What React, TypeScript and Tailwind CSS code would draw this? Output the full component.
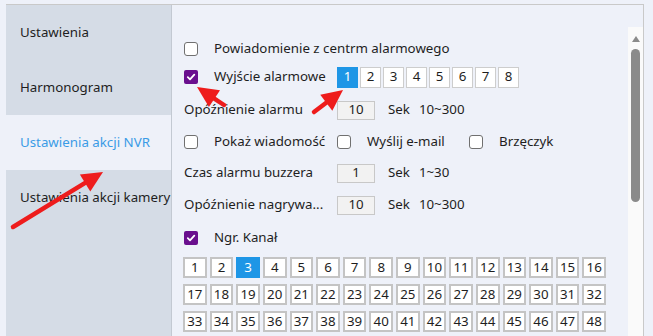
import React from "react";

const outputs = [1, 2, 3, 4, 5, 6, 7, 8];
const channels = Array.from({ length: 48 }, (_, i) => i + 1);

function Box({ checked }: { checked?: boolean }) {
  if (checked) {
    return (
      <span className="flex h-[14px] w-[14px] shrink-0 items-center justify-center rounded-[2px] bg-[#6a0f8e]">
        <svg width="10" height="10" viewBox="0 0 10 10">
          <path d="M1.8 5.2 L4 7.3 L8.3 2.6" fill="none" stroke="#fff" strokeWidth="1.8" strokeLinecap="round" strokeLinejoin="round" />
        </svg>
      </span>
    );
  }
  return <span className="h-[14px] w-[14px] shrink-0 rounded-[3px] border border-[#707070] bg-white" />;
}

function Arrow({ x1, y1, x2, y2 }: { x1: number; y1: number; x2: number; y2: number }) {
  const dx = x2 - x1;
  const dy = y2 - y1;
  const len = Math.hypot(dx, dy);
  const ux = dx / len;
  const uy = dy / len;
  const hl = 21;
  const hw = 10;
  const bx = x2 - ux * hl;
  const by = y2 - uy * hl;
  const pts = `${x2},${y2} ${bx - uy * hw},${by + ux * hw} ${bx + uy * hw},${by - ux * hw}`;
  return (
    <g>
      <line x1={x1} y1={y1} x2={bx + ux * 2} y2={by + uy * 2} stroke="#ee1c1c" strokeWidth="4.5" strokeLinecap="round" />
      <polygon points={pts} fill="#ee1c1c" />
    </g>
  );
}

function Field({ label, value, range }: { label: string; value: string; range: string }) {
  return (
    <>
      <span className="w-[153px] shrink-0 truncate pr-[4px]">{label}</span>
      <span className="flex h-[19px] w-[38px] items-center justify-center border border-[#c8c8c8] bg-[#f2f2f2]">{value}</span>
      <span className="ml-[13px]">Sek</span>
      <span className="ml-[9px]">{range}</span>
    </>
  );
}

export default function App() {
  return (
    <div className="relative h-[336px] w-[653px] overflow-hidden bg-[#eef1f9] pl-[6px] pt-[4px] text-[13.3px] text-[#1e1e1e] [font-family:'Noto_Sans',sans-serif]">
      <div className="flex h-[332px] w-[638px] border-r border-t border-[#c9c9c9]">
        {/* Sidebar */}
        <div className="flex w-[166px] shrink-0 flex-col border-r border-[#c3c9d2] bg-[#d5dce6]">
          <div className="flex h-[55px] items-center pl-[14px]">Ustawienia</div>
          <div className="flex h-[55px] items-center pl-[14px]">Harmonogram</div>
          <div className="flex h-[55px] items-center bg-[#eef1f9] pl-[14px] text-[#3a9be6]">Ustawienia akcji NVR</div>
          <div className="flex h-[55px] items-center overflow-hidden whitespace-nowrap pl-[14px]">Ustawienia akcji kamery</div>
        </div>

        {/* Content */}
        <div className="flex flex-1">
          <div className="flex-1 pl-[12px] pt-[30px]">
            <div className="flex h-[28px] items-center">
              <Box />
              <span className="ml-[16px]">Powiadomienie z centrm alarmowego</span>
            </div>
            <div className="flex h-[28px] items-center">
              <div className="flex w-[153px] items-center">
                <Box checked />
                <span className="ml-[16px]">Wyjście alarmowe</span>
              </div>
              <div className="flex gap-[2px]">
                {outputs.map((n) => (
                  <span
                    key={n}
                    className={
                      n === 1
                        ? "flex h-[21px] w-[21px] items-center justify-center border border-[#1e96e6] bg-[#1e96e6] text-white"
                        : "flex h-[21px] w-[21px] items-center justify-center border border-[#cdcdcd] bg-white"
                    }
                  >
                    {n}
                  </span>
                ))}
              </div>
            </div>
            <div className="flex h-[38px] items-center">
              <Field label="Opóźnienie alarmu" value="10" range="10~300" />
            </div>
            <div className="flex h-[26px] items-center">
              <div className="flex w-[153px] items-center">
                <Box />
                <span className="ml-[16px]">Pokaż wiadomość</span>
              </div>
              <div className="flex w-[132px] items-center">
                <Box />
                <span className="ml-[16px]">Wyślij e-mail</span>
              </div>
              <div className="flex items-center">
                <Box />
                <span className="ml-[16px]">Brzęczyk</span>
              </div>
            </div>
            <div className="flex h-[36px] items-center">
              <Field label="Czas alarmu buzzera" value="1" range="1~30" />
            </div>
            <div className="flex h-[28px] items-center">
              <Field label="Opóźnienie nagrywa..." value="10" range="10~300" />
            </div>
            <div className="flex h-[38px] items-center">
              <Box checked />
              <span className="ml-[16px]">Ngr. Kanał</span>
            </div>
            <div className="-ml-[1px] grid w-[423px] grid-cols-16 gap-x-[3px] gap-y-[6px]">
              {channels.map((n) => (
                <span
                  key={n}
                  className={
                    n === 3
                      ? "flex h-[21px] items-center justify-center border border-[#1e96e6] bg-[#1e96e6] text-white"
                      : "flex h-[21px] items-center justify-center border-2 border-[#c4c4c4] bg-white"
                  }
                >
                  {n}
                </span>
              ))}
            </div>
          </div>

          {/* Scrollbar */}
          <div className="mt-[22px] flex w-[15px] flex-col items-center bg-[#fafafa]">
            <svg className="mt-[9px]" width="8" height="6" viewBox="0 0 8 6">
              <path d="M4 0 L8 6 L0 6 Z" fill="#8a8a8a" />
            </svg>
            <div className="mt-[7px] h-[153px] w-[9px] rounded-full bg-[#8a8a8a]" />
          </div>
        </div>
      </div>

      <svg className="pointer-events-none absolute left-0 top-0" width="653" height="336">
        <Arrow x1={13} y1={227} x2={103} y2={172} />
        <Arrow x1={224} y1={105} x2={197} y2={87} />
        <Arrow x1={314} y1={112} x2={343} y2={90} />
      </svg>
    </div>
  );
}
